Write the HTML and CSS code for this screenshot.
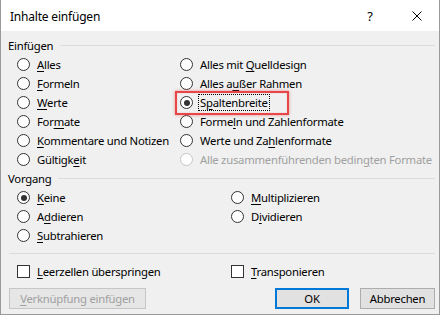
FILE: index.html
```html
<!DOCTYPE html>
<html lang="de">
<head>
<meta charset="utf-8">
<title>Inhalte einfügen</title>
<link rel="stylesheet" href="styles.css">
</head>
<body>
<div class="dialog">
  <div class="titlebar">
    <div class="title">Inhalte einfügen</div>
    <div class="tb-btn help">?</div>
    <div class="tb-btn close">
      <svg width="10" height="10" viewBox="0 0 10 10"><path d="M0.5 0.5L9.5 9.5M9.5 0.5L0.5 9.5" stroke="#000" stroke-width="1" fill="none"/></svg>
    </div>
  </div>
  <div class="content">
    <div class="group-head"><span>Einfügen</span><i class="rule"></i></div>
    <div class="grid paste">
      <label class="opt"><span class="radio"></span><span><u>A</u>lles</span></label>
      <label class="opt"><span class="radio"></span><span>Alles mit <u>Q</u>uelldesign</span></label>
      <label class="opt"><span class="radio"></span><span><u>F</u>ormeln</span></label>
      <label class="opt"><span class="radio"></span><span>Alles a<u>u</u>ßer Rahmen</span></label>
      <label class="opt"><span class="radio"></span><span><u>W</u>erte</span></label>
      <label class="opt marked"><span class="radio on"></span><span class="focus">S<u>p</u>altenbreite</span><span class="callout"></span></label>
      <label class="opt"><span class="radio"></span><span>For<u>m</u>ate</span></label>
      <label class="opt"><span class="radio"></span><span>Forme<u>l</u>n und Zahlenformate</span></label>
      <label class="opt"><span class="radio"></span><span><u>K</u>ommentare und Notizen</span></label>
      <label class="opt"><span class="radio"></span><span>Werte und Za<u>h</u>lenformate</span></label>
      <label class="opt"><span class="radio"></span><span>Gültigk<u>e</u>it</span></label>
      <label class="opt disabled"><span class="radio"></span><span>Alle zusammenführenden bedin<u>g</u>ten Formate</span></label>
    </div>
    <div class="group-head"><span>Vorgang</span><i class="rule"></i></div>
    <div class="grid op">
      <label class="opt"><span class="radio on"></span><span><u>K</u>eine</span></label>
      <label class="opt"><span class="radio"></span><span><u>M</u>ultiplizieren</span></label>
      <label class="opt"><span class="radio"></span><span>A<u>d</u>dieren</span></label>
      <label class="opt"><span class="radio"></span><span>D<u>i</u>vidieren</span></label>
      <label class="opt"><span class="radio"></span><span><u>S</u>ubtrahieren</span></label>
    </div>
    <div class="sep"></div>
    <div class="grid checks">
      <label class="opt"><span class="check"></span><span><u>L</u>eerzellen überspringen</span></label>
      <label class="opt"><span class="check"></span><span><u>T</u>ransponieren</span></label>
    </div>
    <div class="buttons">
      <button class="btn link" disabled><u>V</u>erknüpfung einfügen</button>
      <span class="spacer"></span>
      <button class="btn ok">OK</button>
      <button class="btn cancel">Abbrechen</button>
    </div>
  </div>
</div>
</body>
</html>
```
FILE: styles.css
```css
* { box-sizing: border-box; }
html, body { margin: 0; padding: 0; background: #ffffff; }
body {
  font-family: "Noto Sans", "Open Sans", sans-serif;
  font-size: 11.3px;
  letter-spacing: -0.25px;
  color: #000;
}
.dialog {
  width: 440px;
  height: 315px;
  background: #f0f0f0;
  border: 1px solid #9a9a9a;
  border-top: none;
  display: flex;
  flex-direction: column;
}
.titlebar {
  height: 31px;
  background: #fff;
  display: flex;
  align-items: center;
  flex: none;
}
.title { flex: 1; padding-left: 9px; padding-top: 1px; font-size: 12px; letter-spacing: -0.2px; }
.tb-btn {
  width: 46px;
  height: 31px;
  display: flex;
  align-items: center;
  justify-content: center;
}
.help { font-size: 13px; padding-right: 2px; }
.close { width: 45px; }
.content { padding: 0 4px 0 7px; display: flex; flex-direction: column; flex: 1; }
.group-head {
  height: 19px;
  display: flex;
  align-items: center;
  line-height: 19px;
}
.content > .group-head:first-child { margin-top: 5px; }
.rule { flex: 1; height: 1px; background: #dcdcdc; margin-left: 7px; margin-top: -1px; }
.grid { display: grid; padding-left: 9px; grid-auto-rows: 19px; }
.grid.paste { grid-template-columns: 163px 1fr; }
.grid.op { grid-template-columns: 214px 1fr; }
.grid.checks { grid-template-columns: 214px 1fr; margin-top: 8px; }
.opt {
  display: flex;
  align-items: center;
  gap: 7px;
  white-space: nowrap;
  line-height: 19px;
}
.opt.marked { position: relative; }
.radio {
  width: 13px;
  height: 13px;
  border: 1px solid #333;
  border-radius: 50%;
  background: #fff;
  flex: none;
  display: flex;
  align-items: center;
  justify-content: center;
}
.radio.on::after {
  content: "";
  width: 6px;
  height: 6px;
  border-radius: 50%;
  background: #333;
}
.disabled { color: #a0a0a0; }
.disabled .radio { border-color: #c6c6c6; }
.check {
  width: 13px;
  height: 13px;
  border: 1px solid #333;
  background: #fff;
  flex: none;
}
.focus {
  outline: 1px dotted #000;
  outline-offset: 0;
  line-height: 15px;
  padding: 0 1px;
  margin-left: -1px;
}
.callout {
  position: absolute;
  left: -5px;
  top: -2px;
  width: 114px;
  height: 24px;
  border: 2px solid #e8474a;
  box-shadow: 0 0 3px rgba(232, 71, 74, 0.6), inset 0 0 1px rgba(232, 71, 74, 0.6);
}
u { text-decoration: underline; text-underline-offset: 2px; }
.sep { height: 1px; background: #dcdcdc; margin-top: 8px; margin-left: 1px; }
.buttons { display: flex; margin-top: 7px; align-items: center; }
.spacer { flex: 1; }
.btn {
  font-family: inherit;
  font-size: 11.3px;
  letter-spacing: -0.25px;
  height: 21px;
  padding: 0;
  margin: 0;
  background: #e1e1e1;
  border: 1px solid #adadad;
  color: #000;
  line-height: 19px;
}
.btn.link {
  width: 137px;
  margin-left: 1px;
  background: #e6e6e6;
  border-color: #c6c6c6;
  color: #a0a0a0;
}
.btn.ok { width: 74px; border: 2px solid #0078d7; line-height: 17px; }
.btn.cancel { width: 75px; margin-left: 11px; }
```
